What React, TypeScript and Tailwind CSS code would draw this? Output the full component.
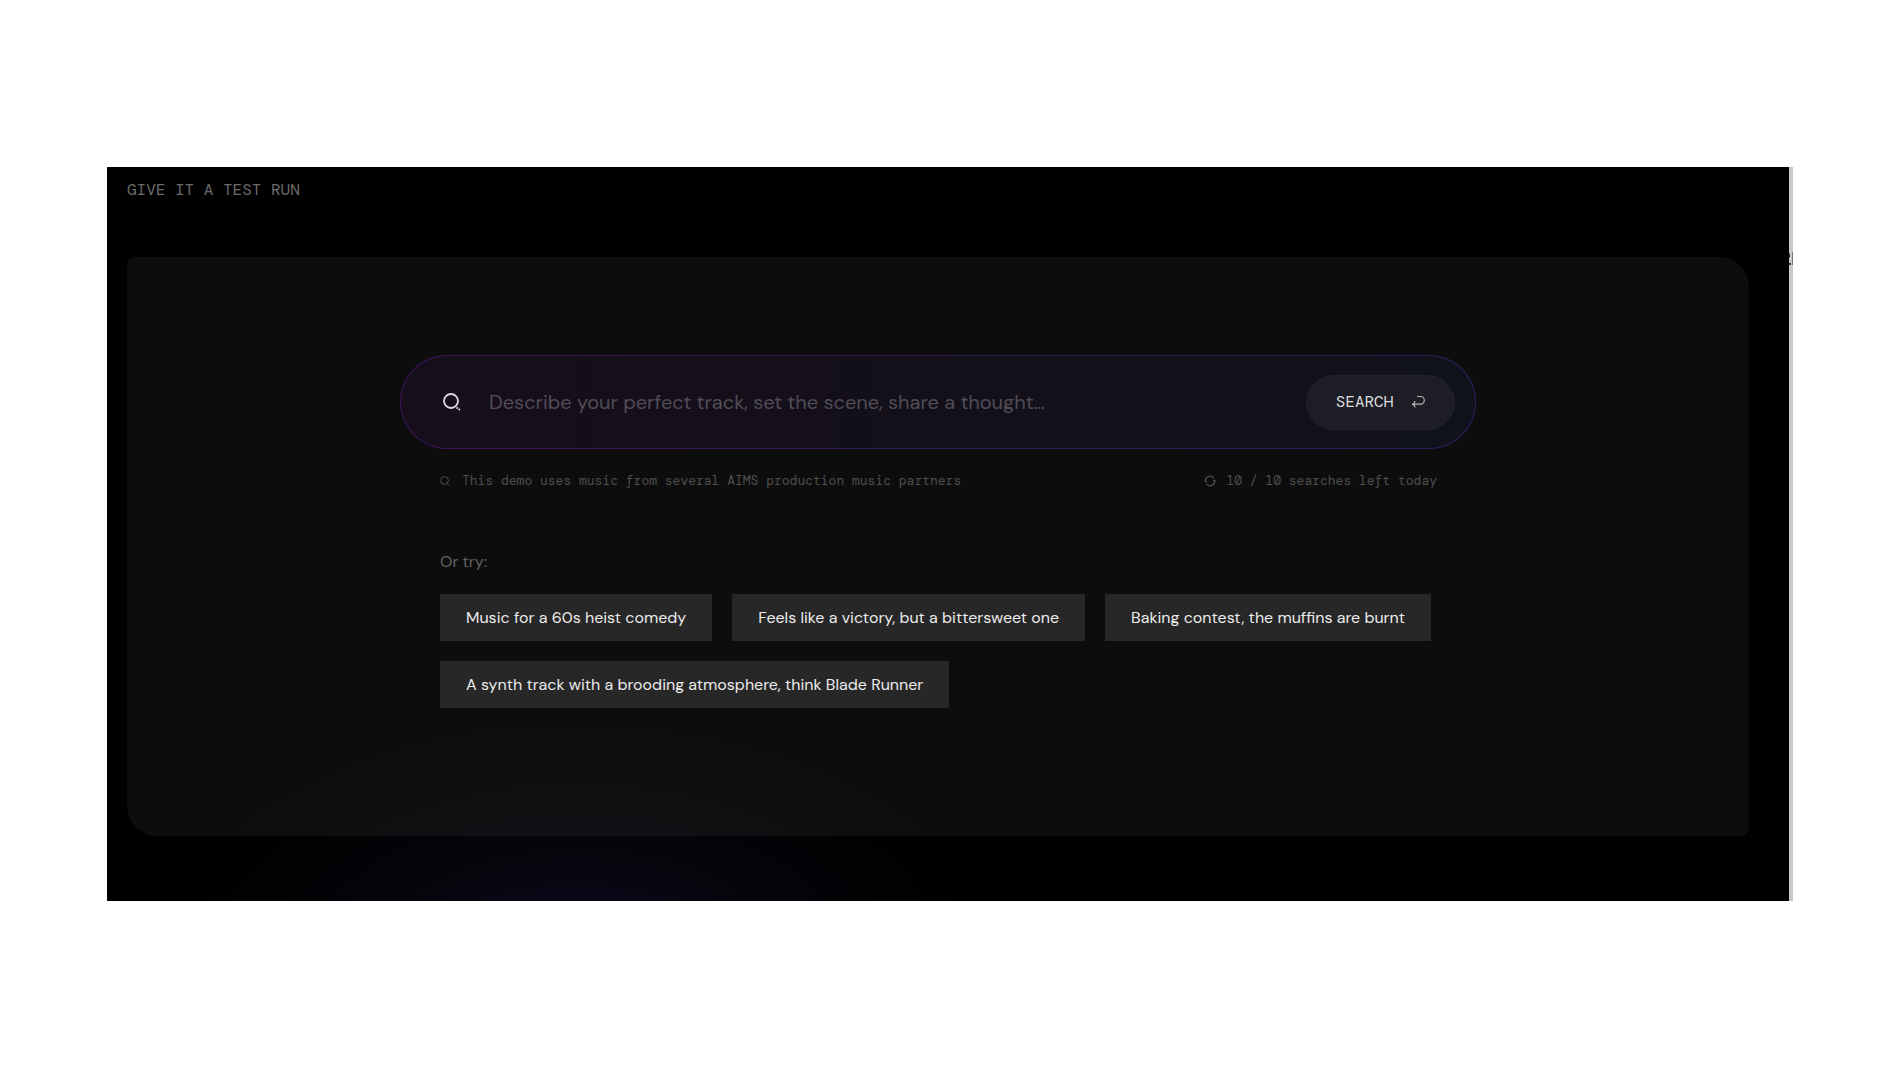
import React, { useState } from "react";

const SearchIcon = ({ className }: { className: string }) => (
  <svg viewBox="0 0 18 18" className={className} fill="none" stroke="currentColor" aria-hidden="true">
    <circle cx="8" cy="8" r="7" strokeWidth="1.8" />
    <path d="M14.2 14.9h.1M16.3 16.6h.1" strokeWidth="2" strokeLinecap="round" />
  </svg>
);

const ReturnIcon = () => (
  <svg viewBox="0 0 14 14" className="size-[14px] text-[#b4b4b8]" fill="none" stroke="currentColor" aria-hidden="true">
    <path d="M6 1.5h3.5a3.6 3.6 0 0 1 0 7.6H1.2M4.2 6A4 4 0 0 1 1.2 9.1 4 4 0 0 1 4.2 12.3" strokeWidth="1.2" />
  </svg>
);

const RefreshIcon = () => (
  <svg viewBox="0 0 12 12" className="size-3" fill="none" stroke="currentColor" aria-hidden="true">
    <path d="M1.6 6.8A4.4 4.4 0 0 1 9.6 3.4M10.4 5.2A4.4 4.4 0 0 1 2.4 8.6" strokeWidth="1.2" />
    <path d="M.3 5.8l1.4 1.3 1.4-1.3M11.7 6.2l-1.4-1.3-1.4 1.3" strokeWidth="1" />
  </svg>
);

const suggestions = [
  "Music for a 60s heist comedy",
  "Feels like a victory, but a bittersweet one",
  "Baking contest, the muffins are burnt",
  "A synth track with a brooding atmosphere, think Blade Runner",
];

const App = () => {
  const [query, setQuery] = useState("");

  return (
    <main className="min-h-screen bg-white px-[107px] py-[167px] font-['DM_Sans','Open_Sans',sans-serif]">
      <section className="relative border-r-4 border-[#cbc9c8] bg-black bg-[radial-gradient(ellipse_420px_250px_at_28%_110%,#110a28,#05050b_50%,transparent)] pt-[13px] pr-10 pb-[65px] pl-5">
        {/* sliver of the panel that sits past the right edge */}
        <svg viewBox="0 0 4 16" className="absolute top-[84px] -right-1 h-4 w-1" aria-hidden="true">
          <path d="M0 2.5h1v4H0zM0 12h2v2H0z" fill="#333" />
          <path d="M3 1h1v13H3z" fill="#777" />
        </svg>

        <h2 className="font-['DM_Mono','DejaVu_Sans_Mono',monospace] text-base leading-5 text-[#6b6b6b]">
          GIVE IT A TEST RUN
        </h2>

        <div className="mt-[57px] rounded-tl-lg rounded-tr-[30px] rounded-br-lg rounded-bl-[30px] bg-white/5 pt-[98px] pb-32">
          <div className="mx-auto w-[1076px] max-w-full">
            <div className="rounded-full bg-linear-to-r from-[#3b145c] to-[#29205f] p-px">
              <form
                className="flex h-[92px] items-center rounded-full bg-linear-to-r from-[#170e1b] via-[#13101a] to-[#10121b] pr-5 pl-[42px]"
                onSubmit={(ev) => ev.preventDefault()}
              >
                <label htmlFor="query" aria-label="Search">
                  <SearchIcon className="size-[18px] text-[#dcdadd]" />
                </label>
                <input
                  id="query"
                  type="text"
                  className="ml-7 grow bg-transparent text-xl text-white outline-none placeholder:text-[#514c55]"
                  placeholder="Describe your perfect track, set the scene, share a thought…"
                  value={query}
                  onChange={(ev) => setQuery(ev.target.value)}
                />
                <button
                  type="submit"
                  className="flex h-[55px] w-[149px] items-center justify-center gap-[18px] rounded-full border border-[#22222a] bg-[#1d1d26] font-['DM_Mono','DejaVu_Sans_Mono',monospace] text-base text-[#dcdcde]"
                >
                  SEARCH
                  <ReturnIcon />
                </button>
              </form>
            </div>

            <div className="mt-[22px] flex items-center justify-between pr-[39px] pl-10 font-['DM_Mono','DejaVu_Sans_Mono',monospace] text-[13px] leading-5 text-[#4f4f4f]">
              <p className="flex items-center gap-3">
                <SearchIcon className="size-[10px]" />
                This demo uses music from several AIMS production music partners
              </p>
              <p className="flex items-center gap-[10px]">
                <RefreshIcon />
                10 / 10 searches left today
              </p>
            </div>

            <div className="mt-[59px] pr-5 pl-10">
              <p className="text-base leading-6 text-[#636363]">Or try:</p>
              <div className="mt-5 flex flex-wrap gap-5">
                {suggestions.map((text) => (
                  <button
                    key={text}
                    type="button"
                    className="h-[47px] bg-[#272727] px-[26px] text-base text-[#ececec]"
                    onClick={() => setQuery(text)}
                  >
                    {text}
                  </button>
                ))}
              </div>
            </div>
          </div>
        </div>
      </section>
    </main>
  );
};

export default App;
